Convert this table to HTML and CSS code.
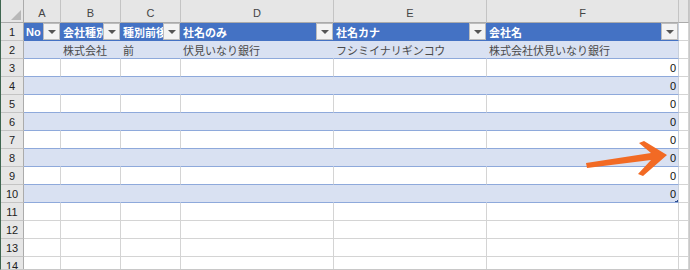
FILE: index.html
```html
<!DOCTYPE html>
<html lang="ja">
<head>
<meta charset="utf-8">
<title>Sheet</title>
<link rel="stylesheet" href="styles.css">
</head>
<body>
<div class="wrap">
  <div class="sheet">
    <div class="corner"><svg class="corner-tri" width="10" height="10" viewBox="0 0 10 10"><polygon points="10,0 10,10 0,10" fill="#b8b8b8"/></svg></div>
    <div class="colhd">A</div>
    <div class="colhd">B</div>
    <div class="colhd">C</div>
    <div class="colhd">D</div>
    <div class="colhd">E</div>
    <div class="colhd">F</div>
    <div class="colhd"></div>

    <div class="rowhd">1</div>
    <div class="th"><span class="lbl">No</span><span class="dd"><i></i></span></div>
    <div class="th"><span class="lbl">会社種別</span><span class="dd"><i></i></span></div>
    <div class="th"><span class="lbl">種別前後</span><span class="dd"><i></i></span></div>
    <div class="th"><span class="lbl">社名のみ</span><span class="dd"><i></i></span></div>
    <div class="th"><span class="lbl">社名カナ</span><span class="dd"><i></i></span></div>
    <div class="th last"><span class="lbl">会社名</span><span class="dd"><i></i></span></div>
    <div class="c"></div>

    <div class="rowhd">2</div>
    <div class="band"></div>
    <div class="band">株式会社</div>
    <div class="band">前</div>
    <div class="band">伏見いなり銀行</div>
    <div class="band">フシミイナリギンコウ</div>
    <div class="band last">株式会社伏見いなり銀行</div>
    <div class="c"></div>

    <div class="rowhd">3</div>
    <div class="plain"></div><div class="plain"></div><div class="plain"></div><div class="plain"></div><div class="plain"></div>
    <div class="plain last num">0</div>
    <div class="c"></div>

    <div class="rowhd">4</div>
    <div class="band"></div><div class="band"></div><div class="band"></div><div class="band"></div><div class="band"></div>
    <div class="band last num">0</div>
    <div class="c"></div>

    <div class="rowhd">5</div>
    <div class="plain"></div><div class="plain"></div><div class="plain"></div><div class="plain"></div><div class="plain"></div>
    <div class="plain last num">0</div>
    <div class="c"></div>

    <div class="rowhd">6</div>
    <div class="band"></div><div class="band"></div><div class="band"></div><div class="band"></div><div class="band"></div>
    <div class="band last num">0</div>
    <div class="c"></div>

    <div class="rowhd">7</div>
    <div class="plain"></div><div class="plain"></div><div class="plain"></div><div class="plain"></div><div class="plain"></div>
    <div class="plain last num">0</div>
    <div class="c"></div>

    <div class="rowhd">8</div>
    <div class="band"></div><div class="band"></div><div class="band"></div><div class="band"></div><div class="band"></div>
    <div class="band last num">0</div>
    <div class="c"></div>

    <div class="rowhd">9</div>
    <div class="plain"></div><div class="plain"></div><div class="plain"></div><div class="plain"></div><div class="plain"></div>
    <div class="plain last num">0</div>
    <div class="c"></div>

    <div class="rowhd">10</div>
    <div class="band"></div><div class="band"></div><div class="band"></div><div class="band"></div><div class="band"></div>
    <div class="band last num handle">0</div>
    <div class="c"></div>

    <div class="rowhd">11</div>
    <div class="c"></div><div class="c"></div><div class="c"></div><div class="c"></div><div class="c"></div><div class="c"></div><div class="c"></div>

    <div class="rowhd">12</div>
    <div class="c"></div><div class="c"></div><div class="c"></div><div class="c"></div><div class="c"></div><div class="c"></div><div class="c"></div>

    <div class="rowhd">13</div>
    <div class="c"></div><div class="c"></div><div class="c"></div><div class="c"></div><div class="c"></div><div class="c"></div><div class="c"></div>

    <div class="rowhd">14</div>
    <div class="c"></div><div class="c"></div><div class="c"></div><div class="c"></div><div class="c"></div><div class="c"></div><div class="c"></div>
  </div>
  <svg class="arrow" width="690" height="270" viewBox="0 0 690 270">
    <polygon points="586,163 651,153 639,143 644,141 667,155 643,176 638,174 651,160 587,168" fill="#f26a24"/>
  </svg>
</div>
</body>
</html>
```
FILE: styles.css
```css
body {
  margin: 0;
  background: #ffffff;
}

.wrap {
  position: relative;
  width: 690px;
  height: 270px;
  overflow: hidden;
}

.sheet {
  width: 690px;
  height: 270px;
  box-sizing: border-box;
  border-left: 1px solid #3f6650;
  border-right: 1px solid #c8c8c8;
  border-bottom: 1px solid #c8c8c8;
  display: grid;
  grid-template-columns: 23px 37px 60px 60px 153px 153px 192px 1fr;
  grid-template-rows: 23px;
  grid-auto-rows: 18px;
  overflow: hidden;
  font-family: "Liberation Sans", "Noto Sans CJK JP", sans-serif;
  font-size: 11px;
}

.sheet > div {
  box-sizing: border-box;
  border-right: 1px solid #d4d4d4;
  border-bottom: 1px solid #d4d4d4;
  display: flex;
  align-items: center;
  overflow: hidden;
  white-space: nowrap;
  min-width: 0;
}

.sheet > .corner {
  background: #e6e6e6;
  border-right-color: #ababab;
  border-bottom-color: #ababab;
  justify-content: flex-end;
  align-items: flex-end;
  padding: 0 2px 2px 0;
}

.corner-tri {
  display: block;
}

.sheet > .colhd {
  background: #e6e6e6;
  color: #444444;
  justify-content: center;
  padding-top: 4px;
  border-right-color: #c4c4c4;
  border-bottom-color: #ababab;
}

.sheet > .rowhd {
  background: #e6e6e6;
  color: #222222;
  justify-content: center;
  border-right-color: #ababab;
  border-bottom-color: #c4c4c4;
}

.sheet > .th {
  background: #4472c4;
  color: #ffffff;
  font-weight: bold;
  padding-left: 2px;
  border-right-color: #4472c4;
  border-bottom-color: #4472c4;
}

.sheet > .th.last {
  border-right-color: #c8d0dc;
}

.lbl {
  flex: 1;
  min-width: 0;
  overflow: hidden;
}

.dd {
  flex: none;
  width: 17px;
  height: 17px;
  box-sizing: border-box;
  border: 1px solid #bcbcbc;
  background: #f3f3f3;
  display: flex;
  align-items: center;
  justify-content: center;
}

.dd i {
  display: block;
  width: 0;
  height: 0;
  border-left: 4px solid transparent;
  border-right: 4px solid transparent;
  border-top: 4px solid #555555;
  margin-top: 1px;
}

.sheet > .band {
  background: #d9e1f2;
  color: #4a4a4a;
  padding-left: 2px;
  border-right-color: #d9e1f2;
  border-bottom-color: #8ea9db;
}

.sheet > .plain {
  color: #4a4a4a;
  padding-left: 2px;
  border-bottom-color: #8ea9db;
}

.sheet > .last {
  border-right-color: #c8d0dc;
}

.sheet > .num {
  justify-content: flex-end;
  padding-right: 2px;
  color: #111111;
}

.sheet > .handle {
  background-image: linear-gradient(135deg, transparent 50%, #2f4f8f 50%);
  background-size: 3px 3px;
  background-position: right bottom;
  background-repeat: no-repeat;
}

.arrow {
  position: absolute;
  left: 0;
  top: 0;
  pointer-events: none;
}
```
